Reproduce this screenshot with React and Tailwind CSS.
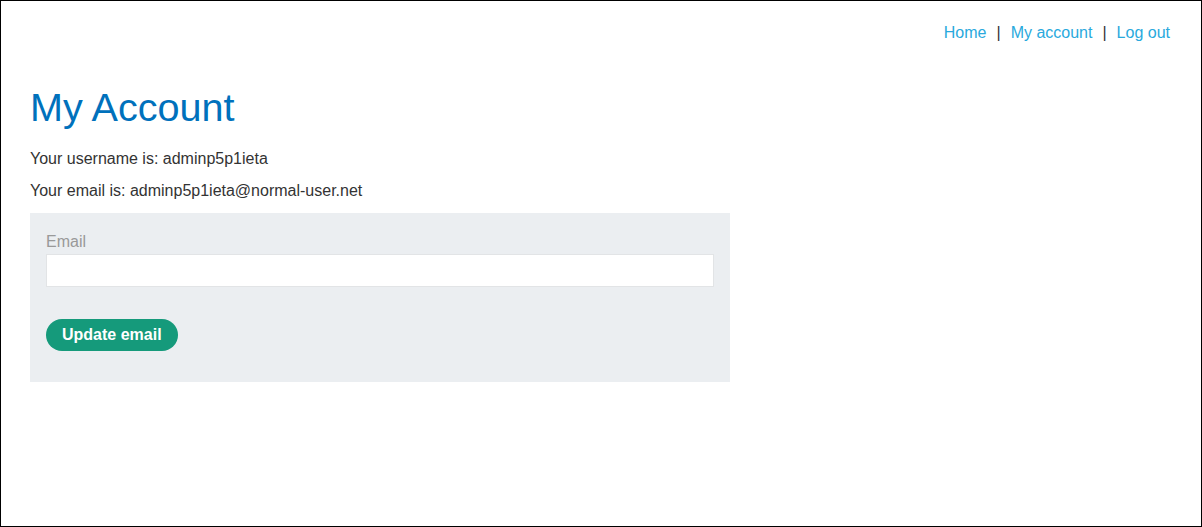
import React from "react";

const font = { fontFamily: '"Liberation Sans", Arial, sans-serif' };

export default function App() {
  return (
    <div
      className="w-[1202px] h-[527px] border border-black bg-white text-[#333] box-border"
      style={font}
    >
      {/* Top nav */}
      <div className="flex justify-end pt-[22px] pr-[31px] text-[16px] leading-[20px]">
        <a className="text-[#29a9dd]">Home</a>
        <span className="mx-[10px] text-[#333]">|</span>
        <a className="text-[#29a9dd]">My account</a>
        <span className="mx-[10px] text-[#333]">|</span>
        <a className="text-[#29a9dd]">Log out</a>
      </div>

      <div className="pl-[29px]">
        <h1 className="mt-[42px] text-[39.6px] leading-[44px] text-[#0071bc]">My Account</h1>
        <p className="mt-[20px] text-[16px] leading-[20px]">Your username is: adminp5p1ieta</p>
        <p className="mt-[12px] text-[16px] leading-[20px]">
          Your email is: adminp5p1ieta@normal-user.net
        </p>

        {/* Update email form */}
        <form className="mt-[12px] w-[700px] bg-[#ebeef1] pt-[19px] pb-[31px] px-[16px]">
          <label className="block text-[16px] leading-[20px] text-[#999]">Email</label>
          <input
            type="email"
            className="mt-[2px] block w-full h-[33px] bg-white border border-[#e2e4e6] outline-none"
          />
          <button
            type="button"
            className="mt-[32px] h-[32px] px-[16px] rounded-full bg-[#159a7b] text-white font-bold text-[16px] leading-[20px]"
          >
            Update email
          </button>
        </form>
      </div>
    </div>
  );
}
